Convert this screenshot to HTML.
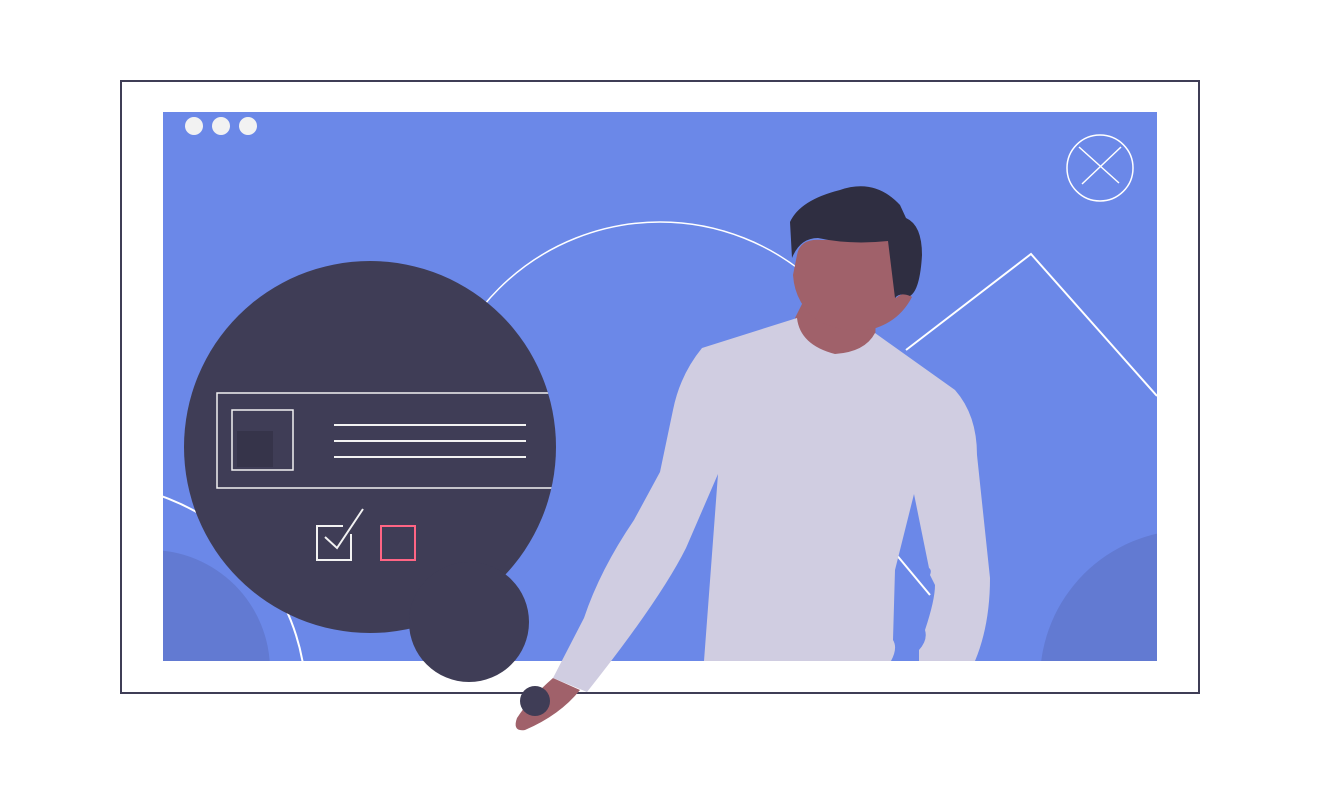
<!DOCTYPE html>
<html><head><style>html,body{margin:0;padding:0;background:#fff;overflow:hidden;width:1320px;height:811px}svg{display:block}</style></head>
<body>
<svg width="1320" height="811" viewBox="0 0 1320 811" xmlns="http://www.w3.org/2000/svg">
<defs><clipPath id="c"><rect x="163" y="112" width="994" height="549"/></clipPath>
<clipPath id="top"><rect x="163" y="112" width="994" height="260"/></clipPath>
<clipPath id="dc"><circle cx="370" cy="447" r="186"/></clipPath></defs>
<rect x="121" y="81" width="1078" height="612" fill="#fff" stroke="#3f3d56" stroke-width="2"/>
<rect x="163" y="112" width="994" height="549" fill="#6b88e8"/>
<g clip-path="url(#c)">
<circle cx="150" cy="670" r="120" fill="#627ad2"/>
<circle cx="1190" cy="680" r="150" fill="#627ad2"/>
<circle cx="90" cy="700" r="216" fill="none" stroke="#fff" stroke-width="2"/>
<polyline points="906,350 1031,254 1157,396" fill="none" stroke="#fff" stroke-width="2"/>
<line x1="895" y1="553" x2="930" y2="595" stroke="#fff" stroke-width="2"/>
</g>
<circle cx="660" cy="450" r="228" fill="none" stroke="#fff" stroke-width="1.5" clip-path="url(#top)"/>
<circle cx="194" cy="126" r="9" fill="#f2f2f2"/>
<circle cx="221" cy="126" r="9" fill="#f2f2f2"/>
<circle cx="248" cy="126" r="9" fill="#f2f2f2"/>
<circle cx="1100" cy="168" r="33" fill="none" stroke="#fff" stroke-width="1.5"/>
<line x1="1079" y1="147" x2="1119" y2="183" stroke="#fff" stroke-width="1.5"/>
<line x1="1121" y1="147" x2="1082" y2="184" stroke="#fff" stroke-width="1.5"/>
<circle cx="370" cy="447" r="186" fill="#3f3d56"/>
<circle cx="469" cy="622" r="60" fill="#3f3d56"/>
<path d="M560,393 L217,393 L217,488 L560,488" fill="none" stroke="#f2f2f2" stroke-width="1.5" clip-path="url(#dc)"/>
<rect x="237" y="431" width="36" height="36" fill="#36344a"/>
<rect x="232" y="410" width="61" height="60" fill="none" stroke="#f2f2f2" stroke-width="1.5"/>
<g stroke="#f2f2f2" stroke-width="2"><line x1="334" y1="425" x2="526" y2="425"/><line x1="334" y1="441" x2="526" y2="441"/><line x1="334" y1="457" x2="526" y2="457"/></g>
<path d="M343,526 L317,526 L317,560 L351,560 L351,534" fill="none" stroke="#f2f2f2" stroke-width="2"/>
<polyline points="325,537 337,548 363,509" fill="none" stroke="#f2f2f2" stroke-width="2"/>
<rect x="381" y="526" width="34" height="34" fill="none" stroke="#ff6584" stroke-width="2"/>
<path d="M553,678 L580,690 Q560,715 525,730 Q512,732 517,718 Q530,698 553,678 Z" fill="#a0616a"/>
<circle cx="535" cy="701" r="15" fill="#3f3d56"/>
<path d="M805,298 L795,318 L800,345 Q830,375 875,345 L876,315 Z" fill="#a0616a"/>
<path d="M702,348 L797,318 Q800,345 835,354 Q865,352 875,333 L955,390 Q977,415 977,455 L990,578 Q990,625 975,661 L919,661 L919,650 Q928,640 925,630 Q935,600 935,585 L930,575 Q932,570 929,568 L914,494 L895,570 L893,640 Q898,648 891,661 L704,661 L718,474 L686,548 Q660,600 587,692 L553,678 L584,618 Q600,570 634,520 L660,472 L673,410 Q680,375 702,348 Z" fill="#d0cde1"/>
<path d="M797,255 Q800,238 822,240 L888,238 L896,298 Q905,290 912,297 Q900,320 876,328 Q850,335 820,322 Q795,305 793,275 Z" fill="#a0616a"/>
<path d="M792,258 L790,222 Q800,200 840,190 Q875,178 900,205 L906,218 Q922,225 922,255 Q920,290 910,296 Q900,292 895,298 L888,241 Q850,245 818,238 Q800,238 792,258 Z" fill="#2f2e41"/>
</svg>
</body></html>
